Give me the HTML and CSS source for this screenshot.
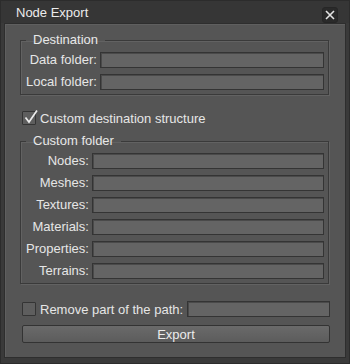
FILE: index.html
```html
<!DOCTYPE html>
<html lang="en">
<head>
  <meta charset="UTF-8" />
  <title>Node Export</title>
  <link rel="stylesheet" href="styles.css">
</head>
<body>
  <div class="window">
    <div class="titlebar">
      <span class="title">Node Export</span>
      <button class="close-button">
        <svg width="10" height="10" viewBox="0 0 10 10"><path d="M1 1L9 9M9 1L1 9" stroke="#e4e4e4" stroke-width="1.6"/></svg>
      </button>
    </div>
    <div class="panel">
      <fieldset class="group">
        <legend>Destination</legend>
        <div class="form-grid">
          <label>Data folder:</label><input type="text">
          <label>Local folder:</label><input type="text">
        </div>
      </fieldset>

      <div class="check-row first">
        <span class="checkbox">
          <svg width="16" height="16" viewBox="0 0 16 16"><path d="M2.5 8.5L6 13L14 1.5" fill="none" stroke="#ececec" stroke-width="1.7"/></svg>
        </span>
        <span>Custom destination structure</span>
      </div>

      <fieldset class="group">
        <legend>Custom folder</legend>
        <div class="form-grid">
          <label>Nodes:</label><input type="text">
          <label>Meshes:</label><input type="text">
          <label>Textures:</label><input type="text">
          <label>Materials:</label><input type="text">
          <label>Properties:</label><input type="text">
          <label>Terrains:</label><input type="text">
        </div>
      </fieldset>

      <div class="check-row remove">
        <span class="checkbox"></span>
        <span class="remove-label">Remove part of the path:</span>
        <input type="text" class="remove-input">
      </div>

      <button class="export-button">Export</button>
    </div>
  </div>
</body>
</html>
```

FILE: styles.css
```css
* {
  margin: 0;
  padding: 0;
  box-sizing: border-box;
}
body {
  width: 350px;
  height: 364px;
  background: #3a3a3a;
  font-family: 'Liberation Sans', Arial, sans-serif;
  font-size: 13px;
  color: #e6e6e6;
  overflow: hidden;
}
.window {
  height: 364px;
  display: flex;
  flex-direction: column;
  border: 1px solid #2c2c2c;
}
.titlebar {
  height: 22px;
  display: flex;
  align-items: center;
  justify-content: space-between;
  padding: 0 11px 0 15px;
  background: #363636;
}
.title {
  font-size: 13px;
  color: #ececec;
}
.close-button {
  width: 16px;
  height: 16px;
  margin-top: 5px;
  border: 1px solid #262626;
  border-radius: 3px;
  background: #2a2a2a;
  display: flex;
  align-items: center;
  justify-content: center;
}
.panel {
  margin: 0 3px 5px;
  height: 335px;
  background: #555555;
  border: 1px solid #2e2e2e;
  box-shadow: inset 1px 1px 0 #5f5f5f;
  padding: 0 16px 0 15px;
  display: flex;
  flex-direction: column;
}
.group {
  margin-top: 8px;
  border: 1px solid #3a3a3a;
  box-shadow: 1px 1px 0 #626262, inset 1px 1px 0 #626262;
  padding: 4px 4px 4px 5px;
}
.group legend {
  padding: 0 7px;
  line-height: 16px;
  color: #e8e8e8;
}
.form-grid {
  display: grid;
  grid-template-columns: auto 1fr;
  column-gap: 3px;
  row-gap: 6px;
}
.form-grid label {
  justify-self: end;
  line-height: 16px;
}
input {
  height: 16px;
  min-width: 0;
  background: #646464;
  border: 1px solid #343434;
  box-shadow: inset 1px 1px 0 #4a4a4a;
  outline: none;
}
.check-row {
  display: flex;
  align-items: center;
  padding-left: 2px;
}
.check-row.first {
  margin-top: 16px;
  height: 14px;
}
.checkbox {
  width: 14px;
  height: 14px;
  flex-shrink: 0;
  margin-right: 4px;
  background: #5e5e5e;
  border: 1px solid #343434;
  border-radius: 1px;
  position: relative;
}
.checkbox svg {
  position: absolute;
  left: 0;
  top: -3px;
}
.check-row.remove {
  margin-top: 17px;
  height: 16px;
  margin-right: -1px;
}
.remove-label {
  white-space: nowrap;
  flex-shrink: 0;
  margin-right: 4px;
}
.remove-input {
  flex: 1;
}
.export-button {
  margin: 8px -1px 0 2px;
  height: 18px;
  border: 1px solid #333333;
  border-radius: 2px;
  background: linear-gradient(#6a6a6a, #5c5c5c);
  color: #ececec;
  font-family: 'Liberation Sans', Arial, sans-serif;
  font-size: 13px;
}
```
